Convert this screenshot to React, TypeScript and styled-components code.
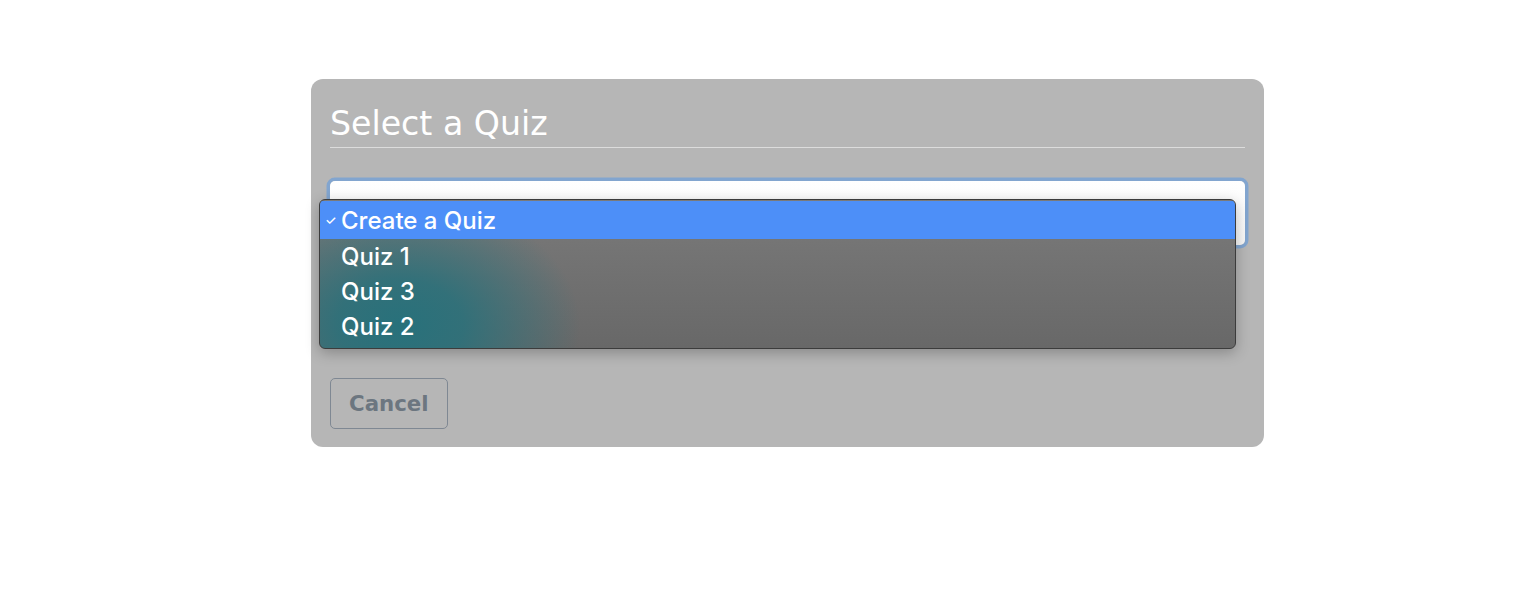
import { createGlobalStyle, styled } from "styled-components";

const GlobalStyle = createGlobalStyle`
  body {
    margin: 0;
    background: #ffffff;
    font-family: "DejaVu Sans", Verdana, sans-serif;
  }
`;

const Page = styled.div`
  padding: 79px 0 0 311px;
  height: 592px;
  box-sizing: border-box;
`;

const Modal = styled.div`
  position: relative;
  width: 953px;
  height: 368px;
  box-sizing: border-box;
  padding: 25px 19px 18px 19px;
  background: #b6b6b6;
  border-radius: 12px;
  display: flex;
  flex-direction: column;
`;

const Title = styled.h2`
  margin: 0;
  padding-bottom: 3px;
  font-size: 33.2px;
  line-height: 40px;
  font-weight: normal;
  color: #ffffff;
  border-bottom: 1px solid #dcdcdc;
`;

const SelectBox = styled.div`
  margin-top: 33px;
  height: 64px;
  background: linear-gradient(#ffffff, #f6f6f6);
  border-radius: 5px;
  box-shadow: 0 0 0 3.5px #82a5cf;
  display: flex;
  align-items: center;
  justify-content: flex-end;
  padding-right: 8px;
`;

const Footer = styled.div`
  margin-top: auto;
  display: flex;
`;

const Button = styled.button`
  height: 51px;
  padding: 0 18px;
  background: transparent;
  border: 1px solid #7f8893;
  border-radius: 5px;
  color: #6c7680;
  font-family: "DejaVu Sans", Verdana, sans-serif;
  font-weight: bold;
  font-size: 21.3px;
`;

const Menu = styled.ul`
  position: absolute;
  left: 8px;
  top: 120px;
  width: 917px;
  box-sizing: border-box;
  margin: 0;
  padding: 1px 0 4px 0;
  list-style: none;
  border: 1px solid #3c3c3c;
  border-radius: 6px;
  overflow: hidden;
  background:
    radial-gradient(ellipse 180px 130px at 80px 125px, #28717b 0%, rgba(40, 113, 123, 0.85) 35%, rgba(40, 113, 123, 0) 100%),
    linear-gradient(#7a7a7a, #686868);
  box-shadow: 0 4px 14px rgba(0, 0, 0, 0.25);
  font-family: Inter, "Noto Sans", sans-serif;
`;

const Item = styled.li<{ $active?: boolean }>`
  position: relative;
  height: ${(p) => (p.$active ? "38px" : "35px")};
  display: flex;
  align-items: center;
  padding-left: 21px;
  font-size: 24px;
  font-weight: 500;
  color: #ffffff;
  background: ${(p) => (p.$active ? "#4d8ff8" : "transparent")};
`;

const Check = styled.span`
  position: absolute;
  left: 5px;
  font-size: 13px;
`;

const options = ["Create a Quiz", "Quiz 1", "Quiz 3", "Quiz 2"];

export default function App() {
  return (
    <>
      <GlobalStyle />
      <Page>
        <Modal>
          <Title>Select a Quiz</Title>
          <SelectBox>
            <svg width="10" height="10" viewBox="0 0 10 10">
              <path d="M2 4 L5 7 L8 4" stroke="#333" strokeWidth="1.5" fill="none" />
            </svg>
          </SelectBox>
          <Footer>
            <Button>Cancel</Button>
          </Footer>
          <Menu>
            {options.map((o, i) => (
              <Item key={o} $active={i === 0}>
                {i === 0 && <Check>✓</Check>}
                {o}
              </Item>
            ))}
          </Menu>
        </Modal>
      </Page>
    </>
  );
}
